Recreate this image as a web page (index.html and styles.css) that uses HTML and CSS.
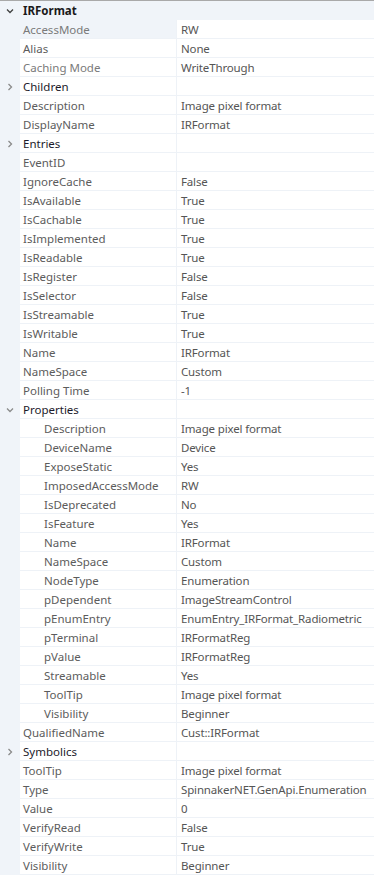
FILE: index.html
```html
<!DOCTYPE html>
<html lang="en">
<head>
    <meta charset="UTF-8">
    <meta name="viewport" content="width=device-width, initial-scale=1.0">
    <title>IRFormat Properties</title>
    <link rel="stylesheet" href="styles.css">
</head>
<body>

    <div class="grid">
        <div class="row top">
            <div class="gutter"><svg class="chev" viewBox="0 0 10 10"><polyline points="2,3.5 5,6.5 8,3.5"/></svg></div>
            <div class="name">IRFormat</div>
            <div class="value"></div>
        </div>
        <div class="row hover"><div class="gutter"></div><div class="name dim">AccessMode</div><div class="value">RW</div></div>
        <div class="row"><div class="gutter"></div><div class="name">Alias</div><div class="value">None</div></div>
        <div class="row"><div class="gutter"></div><div class="name dim">Caching Mode</div><div class="value">WriteThrough</div></div>
        <div class="row cat">
            <div class="gutter"><svg class="chev" viewBox="0 0 10 10"><polyline points="3.5,2 6.5,5 3.5,8"/></svg></div>
            <div class="name">Children</div><div class="value"></div>
        </div>
        <div class="row"><div class="gutter"></div><div class="name">Description</div><div class="value">Image pixel format</div></div>
        <div class="row"><div class="gutter"></div><div class="name">DisplayName</div><div class="value">IRFormat</div></div>
        <div class="row cat">
            <div class="gutter"><svg class="chev" viewBox="0 0 10 10"><polyline points="3.5,2 6.5,5 3.5,8"/></svg></div>
            <div class="name">Entries</div><div class="value"></div>
        </div>
        <div class="row"><div class="gutter"></div><div class="name">EventID</div><div class="value"></div></div>
        <div class="row"><div class="gutter"></div><div class="name">IgnoreCache</div><div class="value">False</div></div>
        <div class="row"><div class="gutter"></div><div class="name">IsAvailable</div><div class="value">True</div></div>
        <div class="row"><div class="gutter"></div><div class="name">IsCachable</div><div class="value">True</div></div>
        <div class="row"><div class="gutter"></div><div class="name">IsImplemented</div><div class="value">True</div></div>
        <div class="row"><div class="gutter"></div><div class="name">IsReadable</div><div class="value">True</div></div>
        <div class="row"><div class="gutter"></div><div class="name">IsRegister</div><div class="value">False</div></div>
        <div class="row"><div class="gutter"></div><div class="name">IsSelector</div><div class="value">False</div></div>
        <div class="row"><div class="gutter"></div><div class="name">IsStreamable</div><div class="value">True</div></div>
        <div class="row"><div class="gutter"></div><div class="name">IsWritable</div><div class="value">True</div></div>
        <div class="row"><div class="gutter"></div><div class="name">Name</div><div class="value">IRFormat</div></div>
        <div class="row"><div class="gutter"></div><div class="name">NameSpace</div><div class="value">Custom</div></div>
        <div class="row"><div class="gutter"></div><div class="name">Polling Time</div><div class="value">-1</div></div>
        <div class="row cat">
            <div class="gutter"><svg class="chev" viewBox="0 0 10 10"><polyline points="2,3.5 5,6.5 8,3.5"/></svg></div>
            <div class="name">Properties</div><div class="value"></div>
        </div>
        <div class="row sub"><div class="gutter"></div><div class="name">Description</div><div class="value">Image pixel format</div></div>
        <div class="row sub"><div class="gutter"></div><div class="name">DeviceName</div><div class="value">Device</div></div>
        <div class="row sub"><div class="gutter"></div><div class="name">ExposeStatic</div><div class="value">Yes</div></div>
        <div class="row sub"><div class="gutter"></div><div class="name">ImposedAccessMode</div><div class="value">RW</div></div>
        <div class="row sub"><div class="gutter"></div><div class="name">IsDeprecated</div><div class="value">No</div></div>
        <div class="row sub"><div class="gutter"></div><div class="name">IsFeature</div><div class="value">Yes</div></div>
        <div class="row sub"><div class="gutter"></div><div class="name">Name</div><div class="value">IRFormat</div></div>
        <div class="row sub"><div class="gutter"></div><div class="name">NameSpace</div><div class="value">Custom</div></div>
        <div class="row sub"><div class="gutter"></div><div class="name">NodeType</div><div class="value">Enumeration</div></div>
        <div class="row sub"><div class="gutter"></div><div class="name">pDependent</div><div class="value">ImageStreamControl</div></div>
        <div class="row sub"><div class="gutter"></div><div class="name">pEnumEntry</div><div class="value">EnumEntry_IRFormat_Radiometric</div></div>
        <div class="row sub"><div class="gutter"></div><div class="name">pTerminal</div><div class="value">IRFormatReg</div></div>
        <div class="row sub"><div class="gutter"></div><div class="name">pValue</div><div class="value">IRFormatReg</div></div>
        <div class="row sub"><div class="gutter"></div><div class="name">Streamable</div><div class="value">Yes</div></div>
        <div class="row sub"><div class="gutter"></div><div class="name">ToolTip</div><div class="value">Image pixel format</div></div>
        <div class="row sub"><div class="gutter"></div><div class="name">Visibility</div><div class="value">Beginner</div></div>
        <div class="row"><div class="gutter"></div><div class="name">QualifiedName</div><div class="value">Cust::IRFormat</div></div>
        <div class="row cat">
            <div class="gutter"><svg class="chev" viewBox="0 0 10 10"><polyline points="3.5,2 6.5,5 3.5,8"/></svg></div>
            <div class="name">Symbolics</div><div class="value"></div>
        </div>
        <div class="row"><div class="gutter"></div><div class="name">ToolTip</div><div class="value">Image pixel format</div></div>
        <div class="row"><div class="gutter"></div><div class="name">Type</div><div class="value">SpinnakerNET.GenApi.Enumeration</div></div>
        <div class="row"><div class="gutter"></div><div class="name">Value</div><div class="value">0</div></div>
        <div class="row"><div class="gutter"></div><div class="name">VerifyRead</div><div class="value">False</div></div>
        <div class="row"><div class="gutter"></div><div class="name">VerifyWrite</div><div class="value">True</div></div>
        <div class="row"><div class="gutter"></div><div class="name">Visibility</div><div class="value">Beginner</div></div>
    </div>

</body>
</html>
```

FILE: styles.css
```css
body {
    margin: 0;
    padding: 0;
    background: #ffffff;
    font-family: 'Noto Sans', 'Open Sans', sans-serif;
    font-size: 11.5px;
    color: #5c5c5c;
    overflow: hidden;
}

.grid {
    border-top: 1px solid #a9a9a9;
    width: 374px;
}

.row {
    display: grid;
    grid-template-columns: 20px 157px 1fr;
    height: 19px;
}

.gutter {
    background: #f0f4f9;
    display: flex;
    align-items: center;
    justify-content: center;
    padding-top: 1px;
}

.name,
.value {
    box-sizing: border-box;
    height: 19px;
    padding-top: 2px;
    line-height: 16px;
    border-bottom: 1px solid #eef2f7;
    white-space: nowrap;
    overflow: hidden;
}

.name {
    padding-left: 3px;
    border-right: 1px solid #eef2f7;
}

.value {
    padding-left: 4px;
    color: #555555;
    letter-spacing: -0.15px;
}

.name.dim {
    color: #7a7a7a;
}

.row.hover .name {
    background: #f0f4f9;
}

.row.top .name,
.row.top .value {
    background: #f0f4f9;
    border-color: #f0f4f9;
}

.row.top .name {
    font-weight: bold;
    color: #1a1a1a;
}

.row.cat .name {
    color: #1c1a2a;
}

.row.sub .name {
    padding-left: 24px;
}

.chev {
    width: 10px;
    height: 10px;
    fill: none;
    stroke: #606060;
    stroke-width: 1.3;
}

.row.cat .chev {
    stroke: #8a8a8a;
}

.row.top .chev {
    stroke: #404040;
}
```
